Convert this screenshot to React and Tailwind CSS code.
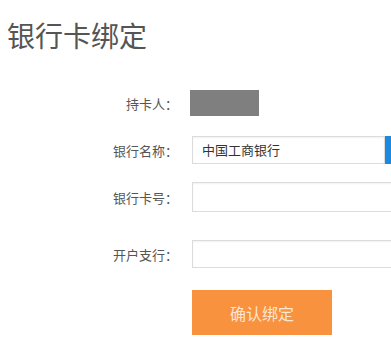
import { useState } from 'react';

const FONT = { fontFamily: '"Noto Sans CJK SC", "Noto Sans", sans-serif' };

function Row({ label, children, className = '' }) {
  return (
    <div className={`flex items-center ${className}`}>
      <div className="w-[178px] shrink-0 text-right text-[13px] leading-none text-[#555]">
        {label}
      </div>
      {children}
    </div>
  );
}

export default function App() {
  const [bank] = useState('中国工商银行');

  return (
    <div className="w-[391px] h-[364px] overflow-hidden bg-white" style={FONT}>
      {/* Title */}
      <h1 className="pt-[21px] pl-[7px] text-[28px] leading-[28px] text-[#555] font-normal">
        银行卡绑定
      </h1>

      {/* Form */}
      <div className="mt-[41px] flex flex-col">
        <Row label="持卡人：" className="h-[26px]">
          <div className="ml-[12px] w-[69px] h-[26px] bg-[#7f7f7f]" />
        </Row>

        <Row label="银行名称：" className="mt-[20px] h-[28px]">
          <div className="ml-[14px] flex h-[28px] shrink-0">
            <div className="w-[193px] h-full flex items-center border border-[#dcdcdc] pl-[9px] text-[13px] text-[#333] shadow-[inset_0_1px_2px_rgba(0,0,0,0.06)]">
              {bank}
            </div>
            <div className="w-[20px] h-full bg-[#1a8ae0]" />
          </div>
        </Row>

        <Row label="银行卡号：" className="mt-[18px] h-[30px]">
          <input
            className="ml-[14px] w-[230px] h-[30px] shrink-0 border border-[#dcdcdc] outline-none shadow-[inset_0_1px_2px_rgba(0,0,0,0.06)]"
            aria-label="银行卡号"
          />
        </Row>

        <Row label="开户支行：" className="mt-[28px] h-[28px]">
          <input
            className="ml-[14px] w-[230px] h-[28px] shrink-0 border border-[#dcdcdc] outline-none shadow-[inset_0_1px_2px_rgba(0,0,0,0.06)]"
            aria-label="开户支行"
          />
        </Row>

        <div className="mt-[22px] pl-[192px]">
          <button className="w-[140px] h-[45px] bg-[#f8923f] text-[16px] text-[#fde6cf]">
            确认绑定
          </button>
        </div>
      </div>
    </div>
  );
}
